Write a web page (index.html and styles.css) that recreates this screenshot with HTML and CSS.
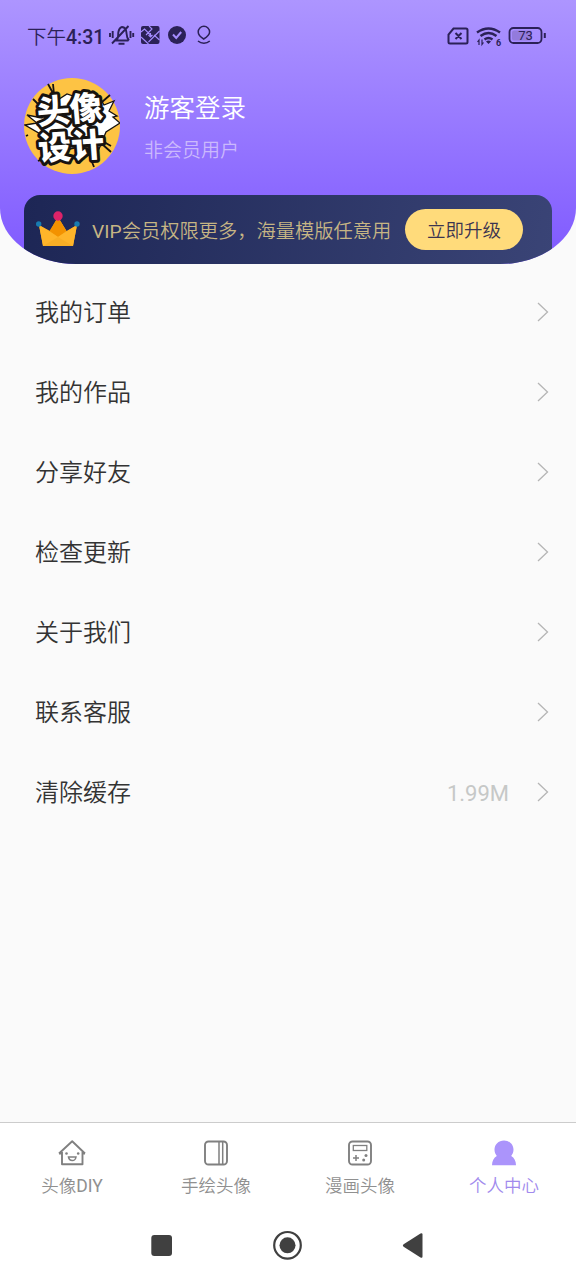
FILE: index.html
```html
<!DOCTYPE html>
<html lang="zh-CN">
<head>
<meta charset="utf-8">
<title>个人中心</title>
<link rel="stylesheet" href="styles.css">
</head>
<body>
<div class="screen">
  <header class="hero">
    <div class="status">
      <span class="time">下午<b>4:31</b></span>
      <svg class="status-left" width="110" height="24" viewBox="0 0 110 24" fill="none" stroke="#2b2157" stroke-width="1.900">
        <path d="M7 17.500h13.500M9 17c1.500-2 1-5 1.300-7.500C10.800 6.500 12 4.500 14 4c3 .3 4.300 3 4.500 6 .2 3 .2 5 2.500 7.500M10.500 20.700h6M4 20.500 20.500 3M2 10v4M4.700 8v7M22.500 8v7M25.200 10v4"/>
        <rect x="33" y="3" width="18.500" height="18" rx="2" fill="#2b2157" stroke="none"/>
        <path d="m33 9 3.500-3 7 7M41 3l3 3-6 6M51.500 8 47 12.500 40.500 19M33 14l7.500 7M46 12l5.500 5M42.500 10v4m-2-2 2 2 2-2" stroke="#a58cff" stroke-width="1.100"/>
        <circle cx="69" cy="12" r="9" fill="#2b2157" stroke="none"/>
        <path d="m65 11.500 3.200 3.500 5-6" stroke="#a58cff" stroke-width="2"/>
        <path d="M95.700 16c-4-2.500-5.500-4.500-5.500-7a5.700 5.700 0 0 1 11.400 0c0 2.500-1.800 4.500-5.900 7ZM90 18c3.300 3 8.500 3 11.800 0" stroke-width="1.500"/>
      </svg>
      <svg class="status-right" width="102" height="24" viewBox="0 0 102 24" fill="none" stroke="#2b2157" stroke-width="1.800">
        <path d="M7.500 4.500H20q1.500 0 1.500 1.500v12q0 1.500-1.500 1.500H4q-1.500 0-1.500-1.500V10.500ZM9.500 9l6 6m0-6-6 6" stroke-width="2"/>
        <path d="M31 8.500q11.500-8 23 0M34.500 12q8-6 16 0M38.500 15.500q4-3 8 0" stroke-width="2.400"/>
        <path d="m42.500 20-2.500-2.500q2.500-2 5 0Z" fill="#2b2157" stroke="none"/>
        <path d="M33 21v-5l-1.500 2M36 15.500v5l1.500-2" stroke-width="1.200"/>
        <text x="50" y="21.500" class="wifi-gen">6</text>
        <rect x="63.500" y="4" width="32" height="15" rx="4"/>
        <path d="M98.800 9v5" stroke-width="2"/>
        <rect x="66" y="6.500" width="20" height="10" rx="2" fill="#937bdc" stroke="none"/>
        <text x="79.500" y="16" class="charge">73</text>
      </svg>
    </div>
    <div class="profile">
      <svg class="avatar" width="96" height="96" viewBox="0 0 96 96">
        <circle cx="48" cy="48" r="48" fill="#fdc344"/>
        <path d="M1 47l12-2-10-8 15 3 5-11 20-13 12 4 7-6 14 6 4 7 10-4-5 10 8 5-4 1 7 6-14 9-7 17-16-3-26 6-11-5-4-12Z" fill="#fff" stroke="#171310" stroke-width="1.300"/>
        <path d="m9 21 9 9M24 6l6 11M29 6l1 10M86 17 78 24M2 58l2-1M66 79l4 10M78 66l9 8M80 64l7 4M18 81l-4 2" stroke="#171310" stroke-width="1.800"/>
        <g class="avatar-text">
          <text transform="translate(14 46.500) rotate(-5)">头像</text>
          <text transform="translate(15 82.500) rotate(-4)">设计</text>
        </g>
      </svg>
      <div class="who">
        <div class="name">游客登录</div>
        <div class="level">非会员用户</div>
      </div>
    </div>
    <div class="vip">
      <svg class="crown" width="44" height="36" viewBox="0 0 44 36">
        <path d="m3 14 11 6 8-14 8.500 14L41 14l-4 21H7Z" fill="#f8ae25"/>
        <path d="m22 6-8.500 14 8.500 6 8.500-6Z" fill="#f39200"/>
        <path d="m3 14 19 12L7 35Z" fill="#ffb52a"/>
        <path d="m41 14-19 12 15 9Z" fill="#ffb52a"/>
        <circle cx="22" cy="5" r="4.700" fill="#dc2369"/>
        <circle cx="2.700" cy="13" r="2.700" fill="#187bb0"/>
        <circle cx="41" cy="13" r="2.700" fill="#187bb0"/>
      </svg>
      <span class="vip-text"><span class="latin">VIP</span>会员权限更多，海量模版任意用</span>
      <span class="upgrade">立即升级</span>
    </div>
  </header>

  <main class="menu">
    <div class="row"><span class="label">我的订单</span><svg class="chevron" viewBox="0 0 12 20"><path d="m1 1 9.500 9L1 19"/></svg></div>
    <div class="row"><span class="label">我的作品</span><svg class="chevron" viewBox="0 0 12 20"><path d="m1 1 9.500 9L1 19"/></svg></div>
    <div class="row"><span class="label">分享好友</span><svg class="chevron" viewBox="0 0 12 20"><path d="m1 1 9.500 9L1 19"/></svg></div>
    <div class="row"><span class="label">检查更新</span><svg class="chevron" viewBox="0 0 12 20"><path d="m1 1 9.500 9L1 19"/></svg></div>
    <div class="row"><span class="label">关于我们</span><svg class="chevron" viewBox="0 0 12 20"><path d="m1 1 9.500 9L1 19"/></svg></div>
    <div class="row"><span class="label">联系客服</span><svg class="chevron" viewBox="0 0 12 20"><path d="m1 1 9.500 9L1 19"/></svg></div>
    <div class="row"><span class="label">清除缓存</span><span class="size">1.99M</span><svg class="chevron" viewBox="0 0 12 20"><path d="m1 1 9.500 9L1 19"/></svg></div>
  </main>

  <nav class="tabs">
    <div class="tab">
      <svg width="28" height="26" viewBox="0 0 28 26" fill="none" stroke="#808080" stroke-width="1.900">
        <path d="M4 12v12.200h20.500V12M1 13.500 14.200 1.300 27 13.500M1 13.500h3m20.500 0H27" stroke-linejoin="round"/>
        <path d="M10.500 17h7.500q-.5 3.500-3.700 3.500T10.500 17Z" stroke-width="1.500"/>
        <circle cx="8.500" cy="13.500" r="1.300" fill="#808080" stroke="none"/><circle cx="20.200" cy="13.500" r="1.300" fill="#808080" stroke="none"/>
      </svg>
      <span>头像<span class="latin">DIY</span></span>
    </div>
    <div class="tab">
      <svg width="28" height="26" viewBox="0 0 28 26" fill="none" stroke="#808080" stroke-width="1.900">
        <rect x="3" y="1.500" width="22" height="23" rx="3.500"/><path d="M17 1.500v23M20.700 1.500v23" stroke-width="1.500"/>
      </svg>
      <span>手绘头像</span>
    </div>
    <div class="tab">
      <svg width="28" height="26" viewBox="0 0 28 26" fill="none" stroke="#808080" stroke-width="1.900">
        <rect x="3" y="1.500" width="22" height="23" rx="3.500"/><rect x="7.300" y="5.500" width="13.500" height="5" stroke-width="1.300"/><path d="M7 18h6M10 15v6" stroke-width="1.500"/>
        <circle cx="20" cy="15.500" r="1.500" fill="#808080" stroke="none"/><circle cx="17.700" cy="20" r="1.500" fill="#808080" stroke="none"/>
      </svg>
      <span>漫画头像</span>
    </div>
    <div class="tab active">
      <svg width="28" height="26" viewBox="0 0 28 26" fill="#ab94fb">
        <path d="M14 .500c5.500 0 9.500 4 9.500 9.300 0 2.500-1 4.500-2.300 6.200 3 1.700 4.800 5 4.800 9.300H2c0-4.300 1.800-7.600 4.800-9.300C5.500 14.300 4.500 12.300 4.500 9.800 4.500 4.500 8.500.500 14 .500Z"/>
      </svg>
      <span>个人中心</span>
    </div>
  </nav>
  <footer class="system">
    <svg width="576" height="70" viewBox="0 0 576 70" fill="#404040">
      <rect x="151.300" y="25" width="20.700" height="21" rx="3"/>
      <circle cx="287.500" cy="35.300" r="13.300" fill="none" stroke="#404040" stroke-width="2.200"/>
      <circle cx="287.500" cy="35.300" r="8"/>
      <path d="m404 34 16.500-10.500q2-1 2 1v22q0 2-2 1L404 37q-2.300-1.500 0-3Z"/>
    </svg>
  </footer>
</div>
</body>
</html>
```
FILE: styles.css
```css
* { box-sizing: border-box; }
body {
  margin: 0;
  background: #fafafa;
  color: #333;
  font-family: Roboto, "Noto Sans CJK SC", sans-serif;
}
svg { display: block; flex: none; }
.screen {
  width: 576px;
  height: 1280px;
  display: flex;
  flex-direction: column;
  overflow: hidden;
}
.hero {
  height: 264px;
  flex: none;
  overflow: hidden;
  border-radius: 0 0 76px 76px / 0 0 56px 56px;
  background: linear-gradient(#ad95ff, #7f59ff);
}
.status {
  height: 72px;
  display: flex;
  align-items: center;
  padding: 0 28px 0 27px;
  color: #2b2157;
}
.time {
  width: 81px;
  padding-top: 3px;
  font-size: 19.5px;
  font-weight: 350;
  white-space: nowrap;
  line-height: 24px;
}
.time b { font-weight: 500; }
.latin { font-weight: 400; }
.status-left { margin-bottom: 2px; }
.status-right { margin-left: auto; }
.wifi-gen { font-size: 9px; font-weight: 700; fill: #2b2157; stroke: none; }
.charge { font-size: 13px; fill: #2b2157; stroke: none; text-anchor: middle; }
.profile { display: flex; padding: 6px 24px 0; height: 123px; }
.avatar-text {
  font-family: "Noto Sans CJK SC", sans-serif;
  font-size: 33px;
  font-weight: 900;
  fill: #fff;
  stroke: #171310;
  stroke-width: 6px;
  stroke-linejoin: round;
  paint-order: stroke;
}
.who { padding: 11px 0 0 24px; }
.name { font-size: 25.5px; font-weight: 350; line-height: 38px; color: #fff; }
.level { margin-top: 10px; font-size: 19px; line-height: 28px; font-weight: 350; color: #cbb9fc; }
.vip {
  width: 528px;
  height: 80px;
  margin: 0 24px;
  padding: 14px 12px 0;
  display: flex;
  align-items: flex-start;
  border-radius: 16px;
  background: linear-gradient(100deg, #1d2655, #3a4476);
}
.crown { margin-top: 2px; }
.vip-text {
  width: 325px;
  padding: 2px 0 0 12px;
  font-size: 19.25px;
  font-weight: 350;
  line-height: 42px;
  color: #c6b584;
  white-space: nowrap;
}
.upgrade {
  width: 118px;
  height: 41px;
  padding-top: 2px;
  border-radius: 21px;
  background: #ffdb7b;
  color: #3b3450;
  font-size: 18.5px;
  font-weight: 350;
  line-height: 41px;
  text-align: center;
}
.menu { flex: 1; padding-top: 8px; }
.row {
  height: 80px;
  display: flex;
  align-items: center;
  justify-content: space-between;
  padding: 0 27px 1px 35px;
  font-size: 24px;
  font-weight: 350;
}
.label { padding-bottom: 3px; }
.size { margin: 3px 28px 0 auto; font-size: 22px; font-weight: 400; color: #c6c8c7; }
.chevron { width: 12px; height: 20px; fill: none; stroke: #b5b5b5; stroke-width: 1.3; }
.tabs {
  height: 88px;
  display: grid;
  grid-template-columns: repeat(4, 1fr);
  background: #fff;
  border-top: 1px solid #ccc;
}
.tab {
  display: flex;
  flex-direction: column;
  align-items: center;
  padding-top: 17px;
  gap: 7px;
  font-size: 17.5px;
  font-weight: 350;
  line-height: 26px;
  color: #909090;
}
.tab.active { color: #a18aed; }
.system { height: 70px; background: #fff; }
```
